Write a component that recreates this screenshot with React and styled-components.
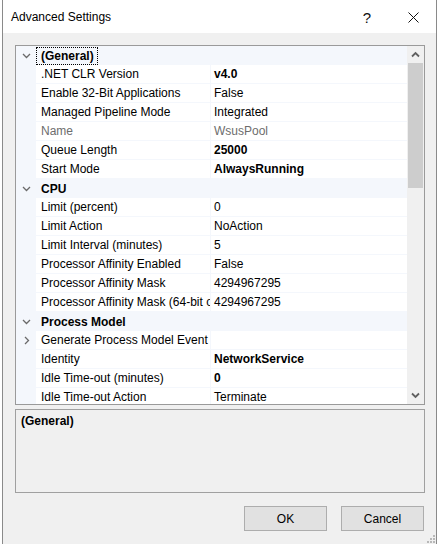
import React from 'react';
import styled, { createGlobalStyle } from 'styled-components';

const GlobalStyle = createGlobalStyle`
  html, body {
    margin: 0;
    padding: 0;
    background: #ffffff;
  }
  body {
    font-family: "Segoe UI", "Liberation Sans", Arial, sans-serif;
    font-size: 12px;
    color: #000;
  }
`;

const sections = [
  {
    name: '(General)',
    focused: true,
    rows: [
      { label: '.NET CLR Version', value: 'v4.0', bold: true },
      { label: 'Enable 32-Bit Applications', value: 'False' },
      { label: 'Managed Pipeline Mode', value: 'Integrated' },
      { label: 'Name', value: 'WsusPool', disabled: true },
      { label: 'Queue Length', value: '25000', bold: true },
      { label: 'Start Mode', value: 'AlwaysRunning', bold: true },
    ],
  },
  {
    name: 'CPU',
    rows: [
      { label: 'Limit (percent)', value: '0' },
      { label: 'Limit Action', value: 'NoAction' },
      { label: 'Limit Interval (minutes)', value: '5' },
      { label: 'Processor Affinity Enabled', value: 'False' },
      { label: 'Processor Affinity Mask', value: '4294967295' },
      { label: 'Processor Affinity Mask (64-bit option)', value: '4294967295' },
    ],
  },
  {
    name: 'Process Model',
    rows: [
      { label: 'Generate Process Model Event Log Entry', value: '', expandable: true },
      { label: 'Identity', value: 'NetworkService', bold: true },
      { label: 'Idle Time-out (minutes)', value: '0', bold: true },
      { label: 'Idle Time-out Action', value: 'Terminate' },
      { label: 'Load User Profile', value: 'True' },
    ],
  },
];

const Window = styled.div`
  box-sizing: border-box;
  width: 435px;
  height: 544px;
  margin-left: 2px;
  border-left: 1px solid #8a8a8a;
  border-right: 1px solid #8a8a8a;
  background: #f0f0f0;
  display: flex;
  flex-direction: column;
  position: relative;
`;

const TitleBar = styled.div`
  box-sizing: border-box;
  height: 33px;
  padding-top: 1px;
  background: #ffffff;
  display: flex;
  align-items: center;
  padding-left: 8px;
`;

const Title = styled.div`
  flex: 1;
  font-size: 12px;
`;

const TitleButton = styled.div`
  width: 46px;
  height: 32px;
  display: flex;
  align-items: center;
  justify-content: center;
  font-size: 15px;
  font-family: "Liberation Sans", Arial, sans-serif;
  color: #111;
`;

const Body = styled.div`
  flex: 1;
  display: flex;
  flex-direction: column;
  padding: 12px 11px 0 12px;
`;

const Grid = styled.div`
  box-sizing: border-box;
  height: 360px;
  border: 1px solid #9a9a9a;
  background: #ffffff;
  display: flex;
`;

const Viewport = styled.div`
  flex: 1;
  overflow: hidden;
`;

const CategoryRow = styled.div`
  height: 19px;
  display: flex;
  align-items: center;
  background: #f4f7fc;
  font-weight: bold;
`;

const Gutter = styled.div`
  width: 20px;
  height: 19px;
  flex: none;
  display: flex;
  align-items: center;
  justify-content: center;
  background: #f4f7fc;
`;

const CategoryName = styled.span`
  box-sizing: border-box;
  margin-left: ${(p) => (p.$focused ? '0' : '5px')};
  padding: ${(p) => (p.$focused ? '1px 4px 0 5px' : '1px 0 0 0')};
  height: 18px;
  line-height: 17px;
  outline: ${(p) => (p.$focused ? '1px dotted #000' : 'none')};
  outline-offset: -1px;
  white-space: nowrap;
`;

const PropRow = styled.div`
  height: 19px;
  display: flex;
`;

const Cell = styled.div`
  box-sizing: border-box;
  height: 19px;
  padding-top: 1px;
  border-bottom: 1px solid #f4f7fc;
  white-space: nowrap;
  overflow: hidden;
  line-height: 17px;
  color: ${(p) => (p.$disabled ? '#6d6d6d' : '#000')};
  font-weight: ${(p) => (p.$bold ? 'bold' : 'normal')};
`;

const LabelCell = styled(Cell)`
  width: 175px;
  flex: none;
  padding-left: 5px;
  border-right: 1px solid #f4f7fc;
`;

const ValueCell = styled(Cell)`
  flex: 1;
  padding-left: 3px;
`;

const Scrollbar = styled.div`
  width: 17px;
  flex: none;
  background: #f0f0f0;
  display: flex;
  flex-direction: column;
`;

const ScrollButton = styled.div`
  height: 17px;
  display: flex;
  align-items: center;
  justify-content: center;
`;

const ScrollTrack = styled.div`
  flex: 1;
`;

const ScrollThumb = styled.div`
  margin: 0 1px;
  height: 125px;
  background: #cdcdcd;
`;

const Description = styled.div`
  box-sizing: border-box;
  margin-top: 4px;
  height: 84px;
  border: 1px solid #a0a0a0;
  padding: 4px 5px;
  font-weight: bold;
`;

const ButtonRow = styled.div`
  display: flex;
  justify-content: flex-end;
  gap: 14px;
  margin-top: 13px;
  padding-right: 1px;
`;

const Button = styled.button`
  box-sizing: border-box;
  width: 83px;
  height: 25px;
  border: 1px solid #adadad;
  background: #e1e1e1;
  font-family: inherit;
  font-size: 12px;
  color: #000;
  padding: 0;
`;

const Grip = styled.svg`
  position: absolute;
  right: 1px;
  bottom: 1px;
`;

const Chevron = ({ dir }) => (
  <svg width="9" height="9" viewBox="0 0 9 9">
    <path
      d={dir === 'down' ? 'M1 3 L4.5 6.5 L8 3' : 'M3 1 L6.5 4.5 L3 8'}
      fill="none"
      stroke="#6a6a6a"
      strokeWidth="1.3"
    />
  </svg>
);

const ScrollArrow = ({ dir }) => (
  <svg width="9" height="7" viewBox="0 0 9 7">
    <path
      d={dir === 'up' ? 'M1 5.5 L4.5 2 L8 5.5' : 'M1 1.5 L4.5 5 L8 1.5'}
      fill="none"
      stroke="#606060"
      strokeWidth="1.8"
    />
  </svg>
);

const App = () => (
  <>
    <GlobalStyle />
    <Window>
      <TitleBar>
        <Title>Advanced Settings</Title>
        <TitleButton>?</TitleButton>
        <TitleButton>
          <svg width="11" height="11" viewBox="0 0 11 11">
            <path d="M0.5 0.5 L10.5 10.5 M10.5 0.5 L0.5 10.5" stroke="#111" strokeWidth="1" />
          </svg>
        </TitleButton>
      </TitleBar>
      <Body>
        <Grid>
          <Viewport>
            {sections.map((section) => (
              <React.Fragment key={section.name}>
                <CategoryRow>
                  <Gutter>
                    <Chevron dir="down" />
                  </Gutter>
                  <CategoryName $focused={section.focused}>{section.name}</CategoryName>
                </CategoryRow>
                {section.rows.map((row) => (
                  <PropRow key={row.label}>
                    <Gutter>{row.expandable && <Chevron dir="right" />}</Gutter>
                    <LabelCell $disabled={row.disabled}>{row.label}</LabelCell>
                    <ValueCell $disabled={row.disabled} $bold={row.bold}>
                      {row.value}
                    </ValueCell>
                  </PropRow>
                ))}
              </React.Fragment>
            ))}
          </Viewport>
          <Scrollbar>
            <ScrollButton>
              <ScrollArrow dir="up" />
            </ScrollButton>
            <ScrollTrack>
              <ScrollThumb />
            </ScrollTrack>
            <ScrollButton>
              <ScrollArrow dir="down" />
            </ScrollButton>
          </Scrollbar>
        </Grid>
        <Description>(General)</Description>
        <ButtonRow>
          <Button>OK</Button>
          <Button>Cancel</Button>
        </ButtonRow>
      </Body>
      <Grip width="8" height="8" viewBox="0 0 8 8">
        {[[6, 0], [6, 3], [3, 3], [6, 6], [3, 6], [0, 6]].map(([x, y]) => (
          <rect key={`${x}-${y}`} x={x} y={y} width="2" height="2" fill="#b8b8b8" />
        ))}
      </Grip>
    </Window>
  </>
);

export default App;
